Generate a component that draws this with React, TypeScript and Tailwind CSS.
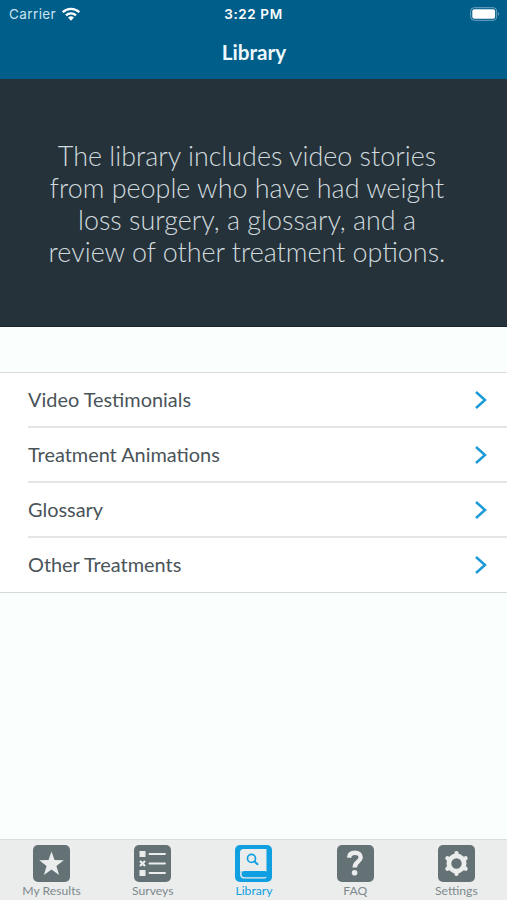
import type { ReactNode } from 'react'

const rows = ['Video Testimonials', 'Treatment Animations', 'Glossary', 'Other Treatments']

const introLines = [
  'The library includes video stories',
  'from people who have had weight',
  'loss surgery, a glossary, and a',
  'review of other treatment options.',
]

const tabs: { label: string; active?: boolean; icon: ReactNode }[] = [
  {
    label: 'My Results',
    icon: <path fill="#ebeded" d="M18.500 6.500l3 8.600 9.300.2-7.400 5.700 2.700 8.900-7.600-5.300-7.600 5.300 2.700-8.900-7.400-5.700 9.300-.2z" />,
  },
  {
    label: 'Surveys',
    icon: (
      <>
        <path fill="#ebeded" d="M5.500 6h6v6h-6zM5.500 25h6v6h-6z" />
        <path stroke="#ebeded" strokeWidth="2.200" d="M6 16l5 5M11 16l-5 5" />
        <path stroke="#ebeded" strokeWidth="1.800" strokeLinecap="round" d="M15.500 9H31M15.500 18.500H31M15.500 28H31" />
      </>
    ),
  },
  {
    label: 'Library',
    active: true,
    icon: (
      <>
        <path fill="#ebeded" d="M5 7.500A3.500 3.500 0 0 1 8.500 4H31.500v22H8a5 5 0 0 0-3 1z" />
        <path fill="#ebeded" d="M5 28.500q0 5 4 5h20.500q2 0 2-2V26H8q-3 0-3 3z" />
        <rect x="6.500" y="26" width="26" height="6.300" rx="3" fill="#109fe0" />
        <circle cx="16.500" cy="13.400" r="4" fill="none" stroke="#109fe0" strokeWidth="1.700" />
        <path stroke="#109fe0" strokeWidth="2" strokeLinecap="round" d="M19.500 16.500l3 2.700" />
      </>
    ),
  },
  {
    label: 'FAQ',
    icon: (
      <>
        <path fill="none" stroke="#ebeded" strokeWidth="4.400" d="M12 12.700c.3-3.500 2.700-5 5.900-5 3.500 0 5.800 1.800 5.800 4.600 0 4.400-6 4.400-6 10.200" />
        <circle cx="17.600" cy="27.800" r="2.800" fill="#ebeded" />
      </>
    ),
  },
  {
    label: 'Settings',
    icon: (
      <>
        <circle cx="18.500" cy="18.500" r="7.600" fill="none" stroke="#ebeded" strokeWidth="4.800" />
        <path stroke="#ebeded" strokeWidth="4.200" strokeLinecap="round" d="M18.500 8.500V8M18.500 28.500v.5M9.800 13.500l-.4-.2M27.200 23.500l.4.200M27.200 13.500l.4-.2M9.800 23.500l-.4.200" />
      </>
    ),
  },
]

function StatusBar() {
  return (
    <div className="grid h-7 grid-cols-3 items-center font-['Inter',sans-serif] text-[13.500px] leading-4 text-white">
      <div className="flex items-center gap-[6px] pl-[9px]">
        <span className="tracking-[0.4px] text-[#c9e4f2]">Carrier</span>
        <svg className="h-[14px] w-[18px]" viewBox="0 0 18 14" fill="none" stroke="white" strokeWidth="2.300">
          <path d="M.8 5.200a11.700 11.700 0 0 1 16.400 0M4 8.400a7.200 7.200 0 0 1 10 0" />
          <path fill="white" stroke="none" d="M9 13.700l-3-3.100a4.300 4.300 0 0 1 6 0z" />
        </svg>
      </div>
      <span className="text-center font-semibold tracking-[0.600px]">3:22 PM</span>
      <svg className="mr-[7px] h-[14px] w-[30px] justify-self-end" viewBox="0 0 30 14">
        <rect x=".7" y=".7" width="26" height="12.600" rx="3.500" fill="none" stroke="#6fa5c4" strokeWidth="1" />
        <rect x="2.300" y="2.300" width="22.800" height="9.400" rx="2" fill="white" />
        <path fill="#6fa5c4" d="M28 5q2 2 0 4z" />
      </svg>
    </div>
  )
}

export default function App() {
  return (
    <div className="flex h-[900px] w-[507px] flex-col overflow-hidden bg-[#fafefd] font-['Lato',sans-serif]">
      <header className="h-[79px] bg-[#005e8a]">
        <StatusBar />
        <h1 className="pt-[9px] pl-px text-center text-[20.700px] leading-[30px] font-bold text-[#eef8fc]">Library</h1>
      </header>

      <section className="h-[248px] border-b border-[#1b252c] bg-[#26323a] pt-[61px] pr-[13px] text-center text-[26.900px] leading-8 font-light text-[#d0dade]">
        {introLines.map((line) => (
          <p key={line} className="whitespace-nowrap">{line}</p>
        ))}
      </section>

      <main className="flex-1 pt-[45px]">
        <ul className="border-y border-[#d6d9da] bg-white">
          {rows.map((row) => (
            <li key={row} className="group pl-7">
              <div className="flex h-[55px] items-center justify-between border-b-2 border-[#e3e5e6] pr-5 text-[19.900px] text-[#4a5459] group-last:h-[54px] group-last:border-b-0">
                <span>{row}</span>
                <svg className="h-[18px] w-3" viewBox="0 0 12 18" fill="none" stroke="#1c9ad8" strokeWidth="2.500">
                  <path d="M1 1l9 8-9 8" />
                </svg>
              </div>
            </li>
          ))}
        </ul>
      </main>

      <nav className="grid h-[61px] grid-cols-5 border-t border-[#d9dddd] bg-[#ebeded] pl-px">
        {tabs.map((tab) => (
          <a key={tab.label} className={tab.active ? 'flex flex-col items-center pt-[5px] text-[#109fe0]' : 'flex flex-col items-center pt-[5px] text-[#7e898c]'}>
            <svg className="size-[37px]" viewBox="0 0 37 37">
              <rect width="37" height="37" rx="5" fill={tab.active ? '#109fe0' : '#647276'} />
              {tab.icon}
            </svg>
            <span className="text-[12.200px] leading-[17px]">{tab.label}</span>
          </a>
        ))}
      </nav>
    </div>
  )
}
